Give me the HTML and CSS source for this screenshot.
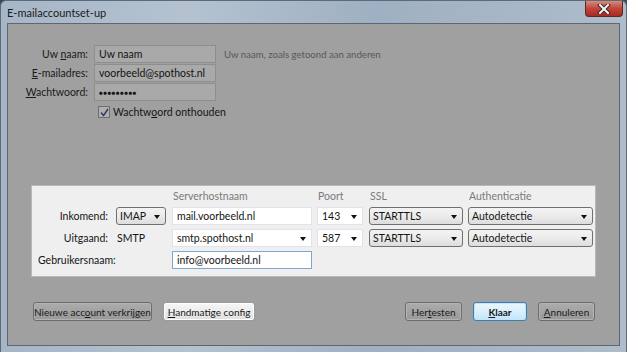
FILE: index.html
```html
<!DOCTYPE html>
<html lang="nl">
<head>
    <meta charset="UTF-8">
    <title>E-mailaccountset-up</title>
    <link rel="stylesheet" href="styles.css">
</head>
<body>
    <div class="window">
        <div class="titlebar">
            <span class="title">E-mailaccountset-up</span>
            <div class="close">
                <svg width="14" height="10" viewBox="0 0 14 10">
                    <path d="M3 1 L11 9 M11 1 L3 9" stroke="#3a2a2a" stroke-width="4" stroke-linecap="square"/>
                    <path d="M3 1 L11 9 M11 1 L3 9" stroke="#f4f4f4" stroke-width="2" stroke-linecap="square"/>
                </svg>
            </div>
        </div>

        <div class="client">
            <div class="identity">
                <label class="lbl">Uw <u>n</u>aam:</label>
                <div class="field">Uw naam</div>
                <span class="hint">Uw naam, zoals getoond aan anderen</span>

                <label class="lbl"><u>E</u>-mailadres:</label>
                <div class="field">voorbeeld@spothost.nl</div>
                <span></span>

                <label class="lbl"><u>W</u>achtwoord:</label>
                <div class="field dots">●●●●●●●●●</div>
                <span></span>

                <span></span>
                <div class="remember">
                    <span class="check">
                        <svg width="9" height="9" viewBox="0 0 9 9"><path d="M1 4.5 L3.5 7.5 L8 1" fill="none" stroke="#2a3a6a" stroke-width="1.4"/></svg>
                    </span>
                    <span>Wachtw<u>o</u>ord onthouden</span>
                </div>
            </div>

            <div class="server">
                <span></span><span></span>
                <span class="head">Serverhostnaam</span>
                <span class="head">Poort</span>
                <span class="head">SSL</span>
                <span class="head">Authenticatie</span>

                <span class="rowlbl">Inkomend:</span>
                <div class="select w50">IMAP<i class="arrow"></i></div>
                <div class="text w140">mail.voorbeeld.nl</div>
                <div class="text combo w46">143<i class="arrow"></i></div>
                <div class="select w94">STARTTLS<i class="arrow"></i></div>
                <div class="select w125">Autodetectie<i class="arrow"></i></div>

                <span class="rowlbl">Uitgaand:</span>
                <span class="proto">SMTP</span>
                <div class="text combo w140">smtp.spothost.nl<i class="arrow"></i></div>
                <div class="text combo w46">587<i class="arrow"></i></div>
                <div class="select w94">STARTTLS<i class="arrow"></i></div>
                <div class="select w125">Autodetectie<i class="arrow"></i></div>

                <span class="userlbl">Gebruikersnaam:</span>
                <div class="text focus w140">info@voorbeeld.nl</div>
            </div>

            <div class="buttons">
                <div class="group">
                    <button class="btn b119">Nieuwe acc<u>o</u>unt verkrijgen</button>
                    <button class="btn light b92"><u>H</u>andmatige config</button>
                </div>
                <div class="group">
                    <button class="btn b57">Her<u>t</u>esten</button>
                    <button class="btn default"><u>K</u>laar</button>
                    <button class="btn b57"><u>A</u>nnuleren</button>
                </div>
            </div>
        </div>
    </div>
</body>
</html>
```

FILE: styles.css
```css
* {
    box-sizing: border-box;
}
body {
    margin: 0;
    background: #3e454d;
    font-family: Lato, "Noto Sans", sans-serif;
    font-size: 10px;
    color: #141414;
}
.window {
    width: 627px;
    height: 352px;
    border-radius: 6px 6px 0 0;
    background: linear-gradient(90deg, #a6b6c7 0%, #b4c2d0 30%, #9fb0c2 60%, #aebccb 100%);
    border: 1px solid #5c6b7a;
    border-bottom: none;
}
.titlebar {
    height: 22px;
    display: flex;
    justify-content: space-between;
    align-items: flex-start;
    padding-left: 6px;
}
.title {
    margin-top: 5px;
    font-size: 11px;
    color: #1a1a1a;
}
.close {
    width: 38px;
    height: 16px;
    margin-right: 3px;
    border: 1px solid #5a2a2a;
    border-top: none;
    border-radius: 0 0 4px 4px;
    background: linear-gradient(#d88a80, #c0463a 50%, #a8291f);
    display: flex;
    align-items: center;
    justify-content: center;
}
.client {
    margin: 0 6px;
    height: 323px;
    background: #a0a0a0;
    border: 1px solid #5d6771;
    display: flex;
    flex-direction: column;
}
.identity {
    display: grid;
    grid-template-columns: 80px 122px auto;
    column-gap: 6px;
    row-gap: 1px;
    align-items: center;
    margin-top: 21px;
    font-size: 10.5px;
}
.lbl {
    text-align: right;
    color: #1a1a1a;
}
.field {
    height: 18px;
    background: #a9a9a9;
    border: 1px solid #8e8e8e;
    padding: 1px 4px;
    line-height: 15px;
}
.dots {
    font-size: 6.5px;
    letter-spacing: 0.3px;
}
.hint {
    margin-left: 2px;
    color: #585858;
    font-size: 9.6px;
}
.remember {
    grid-column: 2 / 4;
    display: flex;
    align-items: center;
    gap: 3px;
    margin: 3px 0 0 4px;
    height: 14px;
    white-space: nowrap;
}
.check {
    width: 12px;
    height: 12px;
    border: 1px solid #6e6e6e;
    background: #b0b0b0;
    display: flex;
    align-items: center;
    justify-content: center;
}
.server {
    margin: 66px 0 0 23px;
    width: 565px;
    background: #efefef;
    border: 1px solid #b9b9b9;
    padding: 3px 4px 7px 6px;
    display: grid;
    grid-template-columns: 78px 56px 145px 52px 99px 125px;
    row-gap: 4px;
    align-items: center;
    font-size: 10.5px;
}
.head {
    color: #7a7a7a;
    height: 14px;
    line-height: 14px;
    padding-left: 1px;
}
.rowlbl {
    text-align: right;
    padding-right: 8px;
}
.proto {
    padding-left: 1px;
}
.userlbl {
    grid-column: 1 / 3;
}
.text, .select {
    position: relative;
    height: 18px;
    line-height: 16px;
    padding: 0 4px;
    white-space: nowrap;
}
.text {
    background: #fff;
    border: 1px solid #e2e3ea;
}
.text.focus {
    border-color: #7ea6cf;
}
.select {
    background: linear-gradient(#f3f3f3, #ebebeb 50%, #dddddd);
    border: 1px solid #707070;
    border-radius: 3px;
    padding-left: 3px;
}
.combo {
    padding-right: 14px;
}
.arrow {
    position: absolute;
    right: 5px;
    top: 7px;
    border-left: 3.5px solid transparent;
    border-right: 3.5px solid transparent;
    border-top: 4px solid #111;
}
.w50 { width: 50px; }
.w140 { width: 140px; }
.w46 { width: 46px; }
.w94 { width: 94px; }
.w125 { width: 125px; }
.buttons {
    margin-top: auto;
    margin-bottom: 24px;
    padding: 0 24px 0 25px;
    display: flex;
    justify-content: space-between;
}
.group {
    display: flex;
    gap: 11px;
}
.btn {
    height: 19px;
    padding: 0;
    font-family: inherit;
    font-size: 10px;
    white-space: nowrap;
    color: #1a1a1a;
    border: 1px solid #6c6c6c;
    border-radius: 3px;
    background: linear-gradient(#acacac, #a2a2a2 50%, #999);
    box-shadow: inset 0 0 0 1px #b4b4b4;
}
.b119 { width: 119px; }
.b92 { width: 92px; }
.b57 { width: 57px; }
.btn.light {
    background: linear-gradient(#f7f7f7, #ececec 50%, #e0e0e0);
    border-color: #9a9a9a;
    box-shadow: inset 0 0 0 1px #fff;
}
.btn.default {
    width: 54px;
    font-weight: bold;
    border-color: #3c7fb1;
    background: linear-gradient(#eaf6fd, #d9f0fc 50%, #bee6fd);
    box-shadow: inset 0 0 0 1px #c6e4f7;
}
```
